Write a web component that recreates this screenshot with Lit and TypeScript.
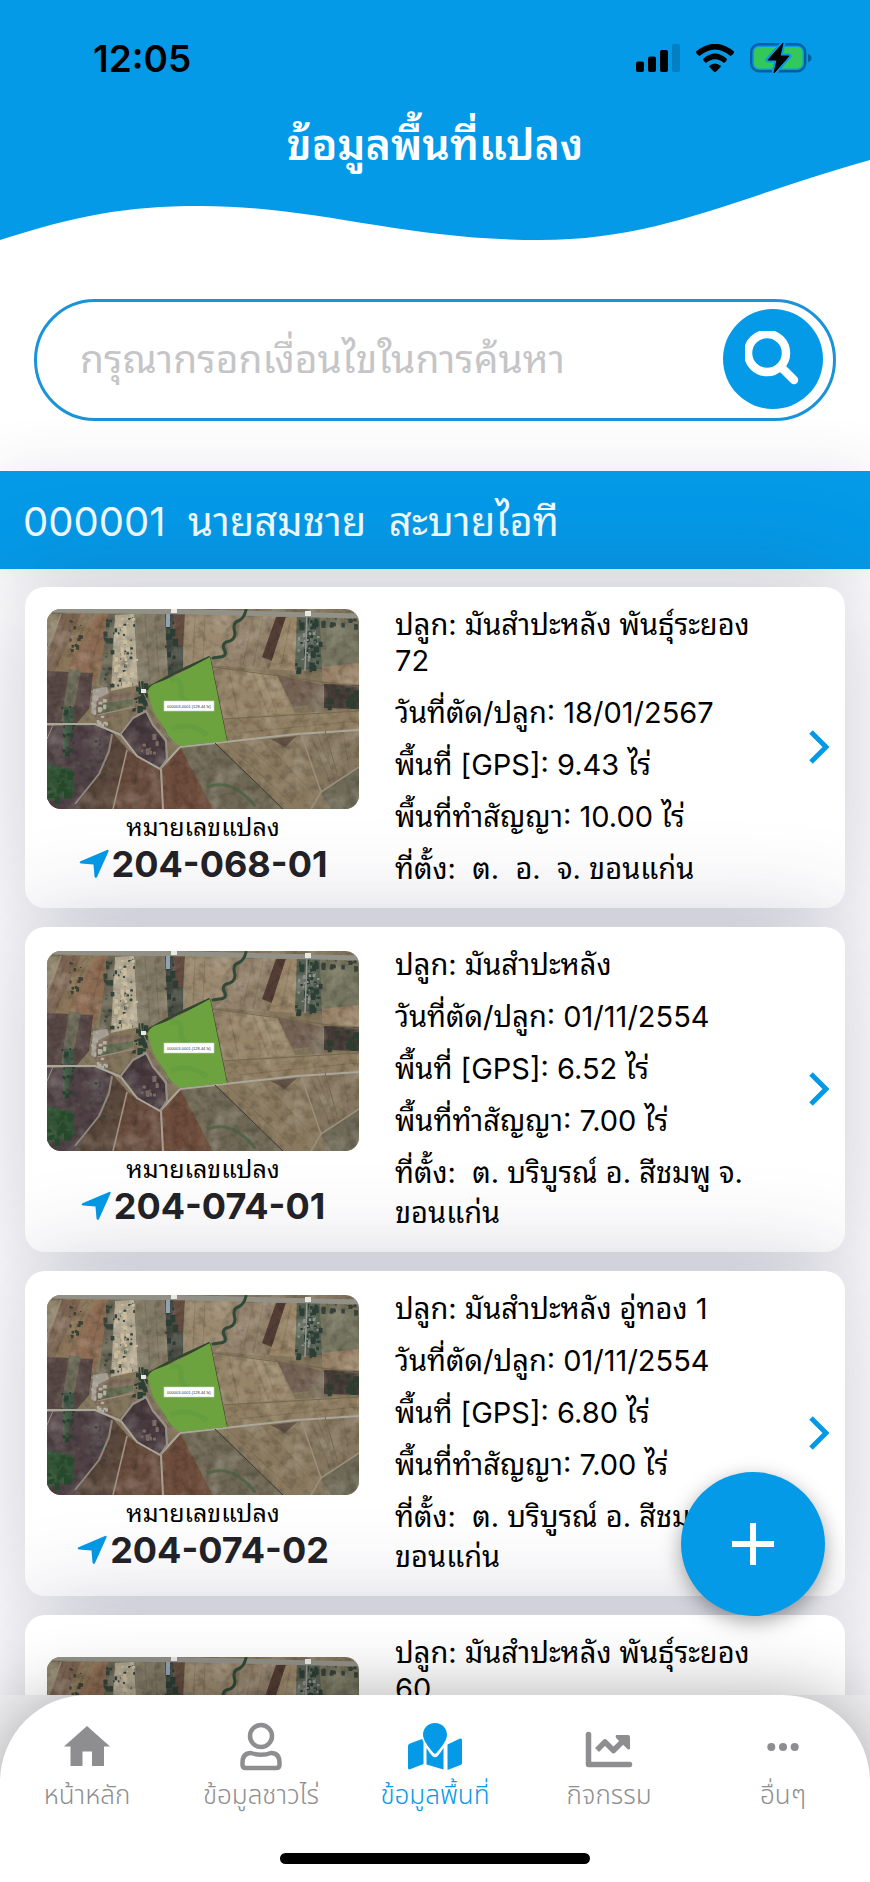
import { LitElement, html, css, svg } from "lit";
import { customElement, property, state } from "lit/decorators.js";
import { classMap } from "lit/directives/class-map.js";

interface Plot {
  id: string;
  crop: string;
  date: string;
  gps: string;
  contract: string;
  place: string;
}

const NB = "\u00a0";

const PLOTS: Plot[] = [
  {
    id: "204-068-01",
    crop: "มันสำปะหลัง พันธุ์ระยอง 72",
    date: "18/01/2567",
    gps: "9.43",
    contract: "10.00",
    place: `${NB}ต.${NB} อ.${NB} จ. ขอนแก่น`,
  },
  {
    id: "204-074-01",
    crop: "มันสำปะหลัง",
    date: "01/11/2554",
    gps: "6.52",
    contract: "7.00",
    place: `${NB}ต. บริบูรณ์ อ. สีชมพู จ. ขอนแก่น`,
  },
  {
    id: "204-074-02",
    crop: "มันสำปะหลัง อู่ทอง 1",
    date: "01/11/2554",
    gps: "6.80",
    contract: "7.00",
    place: `${NB}ต. บริบูรณ์ อ. สีชมพู จ. ขอนแก่น`,
  },
  {
    id: "204-074-03",
    crop: "มันสำปะหลัง พันธุ์ระยอง 60",
    date: "01/11/2554",
    gps: "6.80",
    contract: "7.00",
    place: `${NB}ต. บริบูรณ์ อ. สีชมพู จ. ขอนแก่น`,
  },
];

/* [fill, polygon points] */
const FIELDS: [string, string][] = [
  ["#8f8369", "0,5 15,5 0,48"],
  ["#7c6452", "15,5 34,5 8,62 0,62 0,48"],
  ["#8b765a", "34,5 50,5 22,60 8,62"],
  ["#8c6b52", "50,5 62,5 58,42 48,74 20,60"],
  ["#6a6755", "61,5 69,5 64,80 52,76"],
  ["#b3a992", "68,6 87,5 91,76 64,82"],
  ["#837b66", "88,5 118,5 121,62 98,77 91,74"],
  ["#41463f", "118,5 126,5 128,64 121,66"],
  ["#464b40", "126,30 136,34 136,60 128,64"],
  ["#644d40", "126,5 138,5 136,36 126,36"],
  ["#9b8a70", "138,5 200,5 190,12 186,30 176,36 176,47 163,48 136,60"],
  ["#93826b", "194,8 232,6 216,48 222,62 168,56 182,44 180,36 191,28"],
  ["#533d34", "229,8 239,8 225,52 215,48"],
  ["#9a8669", "239,8 250,6 248,62 222,60"],
  ["#586254", "250,6 273,6 275,60 248,61"],
  ["#767660", "273,8 312,12 312,54 275,58"],
  ["#978166", "275,58 312,54 312,75 275,73"],
  ["#968569", "165,58 230,66 248,104 177,110"],
  ["#9d8c6f", "200,62 230,66 244,100 218,108"],
  ["#756355", "230,66 276,76 262,96 246,98"],
  ["#7a6d59", "262,96 276,76 276,102 258,104"],
  ["#4a3f39", "277,75 312,76 312,100 277,99"],
  ["#907f62", "177,110 248,104 312,102 312,121 180,132"],
  ["#574745", "0,62 46,64 42,100 30,114 0,114"],
  ["#666553", "22,60 34,62 24,114 14,114"],
  ["#425a49", "17,98 27,98 23,150 16,150"],
  ["#857261", "48,84 88,84 90,96 50,112 44,98"],
  ["#616b4e", "52,95 86,90 86,96 50,106"],
  ["#4f4145", "0,117 50,116 66,124 54,160 28,200 0,200"],
  ["#405b45", "16,117 26,117 22,136 16,150"],
  ["#325436", "0,155 24,160 28,184 0,192"],
  ["#5b483c", "66,124 80,140 66,200 28,200 54,160"],
  ["#684c3d", "80,140 90,148 113,160 116,200 66,200"],
  ["#6e4d3c", "114,160 133,138 148,160 166,200 116,200"],
  ["#6f6855", "133,138 168,133 236,200 166,200"],
  ["#89795f", "168,133 254,124 273,182 264,200 236,200"],
  ["#635347", "224,130 250,127 238,138"],
  ["#85765f", "254,124 312,120 312,158 274,182"],
  ["#6e6a57", "312,158 274,184 284,200 312,200"],
  ["#483a3f", "73,126 86,109 99,103 106,116 118,133 119,150 113,159 90,147"],
];

const ROADS: [string, number, string][] = [
  ["#929188", 5, "M0 1 L150 3 L312 7"],
  ["#aca79b", 2, "M0 115 H48 L74 126 L90 147 L113 160 L133 138 L250 125 L312 121"],
  ["#97918a", 2, "M73 126 L86 109 L99 102 L106 116 L119 131 L120 150 L113 160"],
  ["#a79f95", 2, "M114 160 L116 200"],
  ["#a39487", 1.5, "M80 141 L66 200"],
  ["#8f857b", 2, "M65 125 L62 142 L52 165 L28 195"],
  ["#9b9285", 1, "M50 106 L88 98 M0 130 L6 116 M14 5 L0 40"],
  ["#86806e", 1, "M88 6 L94 78 L104 100 L122 130 L133 138"],
  ["#9b8f7c", 1.5, "M254 125 L274 183 L312 158 M274 183 L264 200"],
  ["#999890", 1.5, "M260 6 L258 62"],
  ["#3f3b31", 1, "M168 134 L236 200 M163 48 L180 132"],
  ["#75674f", 1, "M165 58 L232 67 L312 78 M177 110 L312 102 M278 122 L290 164"],
];

/* Small deterministic generator for houses and trees. */
function scatter(seed: number, n: number, x: number, y: number, w: number, h: number, fill: string, size: number) {
  let s = seed;
  const next = () => ((s = (s * 16807) % 2147483647) / 2147483647);
  return Array.from({ length: n }, () => {
    const r = size * (0.4 + next());
    return svg`<rect x=${(x + next() * w).toFixed(1)} y=${(y + next() * h).toFixed(1)} width=${r.toFixed(1)} height=${(r * (0.6 + next())).toFixed(1)} rx=".6" fill=${fill}></rect>`;
  });
}

@customElement("plot-map")
export class PlotMap extends LitElement {
  static styles = css`
    :host {
      display: block;
      overflow: hidden;
      border-radius: 14px;
    }
    svg {
      display: block;
      width: 100%;
      height: auto;
    }
    .tag {
      font-family: "Liberation Sans", "Noto Sans Thai", sans-serif;
      font-size: 4px;
      fill: #333;
    }
  `;

  render() {
    return html`<svg viewBox="0 0 312 200" role="img" aria-label="แผนที่แปลง">
      <defs>
        <filter id="grain" x="0" y="0" width="100%" height="100%">
          <feTurbulence type="fractalNoise" baseFrequency=".12" numOctaves="4" seed="8"></feTurbulence>
          <feColorMatrix values="0 0 0 0 0  0 0 0 0 0  0 0 0 0 0  1.8 0 0 0 -.78"></feColorMatrix>
        </filter>
        <filter id="glint" x="0" y="0" width="100%" height="100%">
          <feTurbulence type="fractalNoise" baseFrequency=".05" numOctaves="4" seed="3"></feTurbulence>
          <feColorMatrix values="0 0 0 0 1  0 0 0 0 .95  0 0 0 0 .85  1.6 0 0 0 -.74"></feColorMatrix>
        </filter>
      </defs>
      <rect width="312" height="200" fill="#84765d"></rect>
      ${FIELDS.map(([fill, points]) => svg`<polygon points=${points} fill=${fill}></polygon>`)}
      <g stroke="#4b3f2e" stroke-width=".6" opacity=".35" fill="none">
        <path d="M20 8 L4 52 M26 8 L10 56 M42 8 L22 48 M56 8 L42 66 M98 8 L103 72 M108 8 L112 68 M148 8 L146 54 M158 8 L156 50 M206 10 L196 56 M216 10 L206 58 M244 10 L234 58"></path>
        <path d="M206 64 L222 106 M216 66 L230 104 M182 62 L192 108 M180 134 L246 196 M196 132 L256 188 M214 130 L264 182 M264 126 L284 176 M270 124 L288 170 M190 124 L310 112 M296 122 L302 160 M150 142 L196 196 M92 152 L84 196 M102 158 L98 198 M124 156 L140 198"></path>
      </g>
      <rect width="312" height="200" filter="url(#grain)" opacity=".25"></rect>
      <rect width="312" height="200" filter="url(#glint)" opacity=".3"></rect>
      ${scatter(11, 34, 64, 8, 24, 70, "#34443d", 2)}
      ${scatter(5, 40, 66, 8, 22, 70, "#c9bd9e", 3)}
      ${scatter(21, 34, 248, 8, 24, 54, "#2c3f36", 4)}
      ${scatter(31, 26, 249, 14, 23, 40, "#8f9290", 2)}
      ${scatter(41, 18, 274, 7, 34, 9, "#36413a", 3)}
      ${scatter(51, 24, 14, 96, 14, 52, "#2a4032", 3)}
      ${scatter(61, 24, 44, 78, 16, 38, "#b4afa5", 3)}
      ${scatter(71, 22, 84, 70, 14, 34, "#2c4034", 4)}
      ${scatter(81, 20, 280, 78, 30, 20, "#2f3d31", 5)}
      ${scatter(91, 26, 0, 156, 24, 32, "#27492b", 4)}
      ${scatter(15, 12, 94, 124, 16, 22, "#7a6a66", 3)}
      ${scatter(17, 14, 40, 130, 18, 40, "#34433b", 3)}
      ${scatter(19, 20, 56, 10, 8, 66, "#34433b", 3)}
      ${scatter(23, 14, 22, 8, 14, 34, "#3d4234", 3)}
      ${scatter(29, 14, 118, 8, 8, 52, "#2c3d35", 4)}
      <path d="M46 80 L60 78 L62 84 L50 90 L48 106 L44 104 Z" fill="#aaa69f" opacity=".8"></path>
      <rect x="119" y="5" width="4" height="13" fill="#8fa3b5"></rect>
      <path d="M160 178 Q178 172 192 182 T208 198" fill="none" stroke="#46613f" stroke-width="3" opacity=".7"></path>
      ${ROADS.map(([stroke, width, d]) => svg`<path d=${d} fill="none" stroke=${stroke} stroke-width=${width} stroke-linejoin="round"></path>`)}
      <path
        d="M199 1 Q197 10 191 12 T188 24 Q188 32 179 33 Q174 36 178 42 Q180 48 172 48 L166 49"
        fill="none" stroke="#2f4a38" stroke-width="3" stroke-linecap="round"
      ></path>
      <path d="M163 48 L126 65 L101 79" fill="none" stroke="#31472f" stroke-width="3"></path>
      <path d="M163 48 L180 132 L133 137 Q122 130 119 122 L106 102 L101 84 Q101 78 107 75 L126 68 Z" fill="#6ca33f"></path>
      <path d="M124 72 Q134 68 134 80 T142 92 M124 120 Q144 112 160 126" fill="none" stroke="#5a963c" stroke-width="5" opacity=".35"></path>
      <rect x="124" y="0" width="6" height="4" fill="#e8e8e4"></rect>
      <rect x="258" y="2" width="6" height="5" fill="#e8e8e4"></rect>
      <rect x="94" y="80" width="5" height="4" fill="#e8e8e4"></rect>
      <rect x="117" y="92" width="50" height="10" fill="#fff" stroke="#c9d3bf" stroke-width=".6"></rect>
      <text class="tag" x="142" y="99" text-anchor="middle">000003-0001 (128.44 ไร่)</text>
    </svg>`;
  }
}

@customElement("plot-card")
export class PlotCard extends LitElement {
  @property({ attribute: false }) plot!: Plot;

  static styles = css`
    :host {
      display: block;
      background: #fff;
      border-radius: 20px;
      box-shadow: 0 0 100px rgba(50, 50, 93, 0.27);
    }
    .card {
      display: grid;
      grid-template-columns: minmax(0, 312fr) minmax(0, 402fr) 20px;
      column-gap: 24px;
      align-items: center;
      padding: 12px 16px 13px 22px;
    }
    .photo {
      display: flex;
      flex-direction: column;
      text-align: center;
    }
    .caption {
      margin: 0;
      padding-top: 2px;
      font-size: 25px;
      line-height: 32px;
    }
    .number {
      display: flex;
      justify-content: center;
      align-items: center;
      gap: 3px;
      color: #222226;
      font-size: 36px;
      font-weight: 700;
      line-height: 42px;
      text-decoration: none;
    }
    .arrow {
      width: 30px;
      height: 30px;
      fill: #0499e6;
    }
    .facts {
      padding: 0 16px 0 12px;
      font-size: 29px;
      line-height: 36px;
    }
    .fact {
      margin: 0;
      padding: 8px 0;
    }
    .place {
      padding: 6px 0;
      line-height: 40px;
    }
    .open {
      display: block;
      padding: 0;
      border: 0;
      background: none;
      cursor: pointer;
    }
    .chevron {
      display: block;
      width: 20px;
      height: 34px;
      fill: none;
      stroke: #0499e6;
      stroke-width: 5;
    }
  `;

  render() {
    const p = this.plot;
    return html`<article class="card">
      <div class="photo">
        <plot-map></plot-map>
        <p class="caption">หมายเลขแปลง</p>
        <a class="number" href="#${p.id}">
          <svg class="arrow" viewBox="0 0 30 30" aria-hidden="true">
            <path d="M28 1 Q30 0 29.500 2.500 L18 28 Q16.500 30 15.500 27.500 L14.500 15.500 L2 14.500 Q-.5 13.800 1.500 12.300 Z"></path>
          </svg>
          <span>${p.id}</span>
        </a>
      </div>
      <div class="facts">
        <p class="fact">ปลูก: ${p.crop}</p>
        <p class="fact">วันที่ตัด/ปลูก: ${p.date}</p>
        <p class="fact">พื้นที่ [GPS]: ${p.gps} ไร่</p>
        <p class="fact">พื้นที่ทำสัญญา: ${p.contract} ไร่</p>
        <p class="fact place">ที่ตั้ง: ${p.place}</p>
      </div>
      <button class="open" aria-label="ดูรายละเอียด">
        <svg class="chevron" viewBox="0 0 20 34"><path d="M2 2 L17 17 L2 32"></path></svg>
      </button>
    </article>`;
  }
}

const TABS = [
  {
    label: "หน้าหลัก",
    icon: svg`<path d="M24 4 L47 24.500 H41 V44 H29 V29.500 H19.500 V44 H7.500 V24.500 H1 Z"></path>`,
  },
  {
    label: "ข้อมูลชาวไร่",
    icon: svg`<g fill="none" stroke="currentColor" stroke-width="4.500">
      <circle cx="24" cy="14" r="11"></circle>
      <path d="M14 31 Q24 34.500 34 31 Q42.500 31 42.500 41 V43 Q42.500 46 39 46 H9 Q5.500 46 5.500 43 V41 Q5.500 31 14 31 Z" stroke-linejoin="round"></path>
    </g>`,
  },
  {
    label: "ข้อมูลพื้นที่",
    icon: svg`<path d="M24 1 C17 1 12 6 12 13 C12 19 20 28 22.500 31 Q24 32.500 25.500 31 C28 28 36 19 36 13 C36 6 31 1 24 1 Z"></path>
      <path d="M11 17 L-1 21.500 Q-3 22 -3 24 V46 Q-3 48 -1 47.300 L12.500 42 V20 Z"></path>
      <path d="M15.500 26 V42.500 L32.500 47.500 V26 Q29 31.500 26.500 34.200 Q24 36.500 21.500 34.200 Q18.500 31 15.500 26 Z"></path>
      <path d="M36.500 22.500 L49 16.500 Q51 16 51 18 V41 Q51 42.500 49.500 43 L36.500 48 Z"></path>`,
  },
  {
    label: "กิจกรรม",
    icon: svg`<g fill="none" stroke="currentColor" stroke-width="5.500" stroke-linecap="round" stroke-linejoin="round">
      <path d="M3.500 12.500 V42.500 H44.500"></path>
      <path d="M12 28 L20 20 L28.500 28.500 L39 18" stroke-linecap="butt"></path>
    </g>
    <path d="M31 13 H43 Q45 13 45 15 V27 Q43 28 42 26.500 L31.500 16.500 Q30 14.500 31 13 Z"></path>`,
  },
  {
    label: "อื่นๆ",
    icon: svg`<circle cx="12.300" cy="25" r="4"></circle><circle cx="24" cy="25" r="4"></circle><circle cx="35.700" cy="25" r="4"></circle>`,
  },
];

@customElement("app-root")
export class AppRoot extends LitElement {
  @state() private active = 2;

  static styles = css`
    :host {
      position: relative;
      display: flex;
      flex-direction: column;
      height: 100vh;
      overflow: hidden;
      background: #fff;
      color: #000;
      font-family: Inter, "Noto Sans Thai Looped", "Noto Looped Thai", "Loma", "Garuda", "Waree", "Noto Sans Thai", sans-serif;
    }
    * {
      box-sizing: border-box;
    }
    .header {
      flex: none;
      background: #049ae8;
    }
    .status {
      display: flex;
      justify-content: space-between;
      align-items: center;
      height: 116px;
      padding: 0 58px 0 93px;
    }
    .clock {
      font-size: 37px;
      font-weight: 600;
    }
    .indicators {
      display: flex;
      align-items: center;
      gap: 16px;
    }
    .indicators svg {
      display: block;
    }
    .title {
      margin: 0;
      color: #fff;
      font-size: 43px;
      font-weight: 600;
      line-height: 44px;
      height: 44px;
      padding-top: 6px;
      text-align: center;
    }
    .wave {
      display: block;
      width: 100%;
      height: 82px;
      fill: #fff;
    }
    .content {
      flex: 1;
      min-height: 0;
      overflow-y: auto;
      scrollbar-width: none;
    }
    .search {
      display: flex;
      align-items: center;
      margin: 57px 34px 50px;
      padding: 7px 10px 9px 43px;
      border: 3px solid #1b93d8;
      border-radius: 61px;
      background: #fff;
    }
    .query {
      flex: 1;
      min-width: 0;
      padding: 0;
      border: 0;
      outline: 0;
      background: none;
      color: #222;
      font: inherit;
      font-size: 39px;
      line-height: 60px;
    }
    .query::placeholder {
      color: #c5c5c7;
      opacity: 1;
    }
    .find {
      display: grid;
      place-items: center;
      width: 100px;
      height: 100px;
      padding: 0;
      border: 0;
      border-radius: 50%;
      background: #049ae8;
    }
    .owner {
      margin: 0;
      padding: 21px 23px 17px;
      background: #049ae8;
      box-shadow: 0 0 60px rgba(50, 50, 93, 0.12);
      color: #f2fbff;
      font-size: 40px;
      font-weight: 400;
      line-height: 60px;
    }
    .list {
      display: grid;
      gap: 19px;
      padding: 18px 25px 40px;
    }
    .add {
      position: absolute;
      right: 45px;
      bottom: 266px;
      z-index: 1;
      display: grid;
      place-items: center;
      width: 144px;
      height: 144px;
      padding: 0;
      border: 0;
      border-radius: 50%;
      background: #049ae8;
      box-shadow: 0 6px 20px rgba(0, 0, 0, 0.35);
    }
    .dock {
      position: relative;
      flex: none;
      background: #f2f2f4;
    }
    .tabs {
      display: grid;
      grid-template-columns: repeat(5, 1fr);
      padding: 27px 0 38px;
      border-radius: 87px 87px 0 0;
      background: #fff;
      box-shadow: 0 0 70px rgba(0, 0, 0, 0.32);
    }
    .tab {
      display: flex;
      flex-direction: column;
      align-items: center;
      gap: 5px;
      padding: 0;
      border: 0;
      background: none;
      color: #8e8e90;
      font-family: Inter, "Noto Sans Thai", sans-serif;
      font-size: 26px;
      font-weight: 300;
      line-height: 40px;
    }
    .tab.active {
      color: #049ae8;
    }
    .icon {
      width: 48px;
      height: 48px;
      overflow: visible;
      fill: currentColor;
    }
    .home {
      width: 310px;
      height: 11px;
      margin: 0 auto;
      border-radius: 6px;
      background: #000;
    }
    .foot {
      position: relative;
      padding-bottom: 18px;
      background: #fff;
    }
  `;

  render() {
    return html`
      <header class="header">
        <div class="status">
          <span class="clock">12:05</span>
          <div class="indicators">
            <svg width="44" height="28" viewBox="0 0 44 28" aria-hidden="true">
              <rect y="17.500" width="8" height="10.500" rx="2"></rect>
              <rect x="12" y="12.500" width="8" height="15.500" rx="2"></rect>
              <rect x="24" y="6" width="8" height="22" rx="2"></rect>
              <rect x="36" width="8" height="28" rx="2" fill="#0380c4"></rect>
            </svg>
            <svg width="38" height="28" viewBox="0 0 38 28" aria-hidden="true">
              <path d="M0 7.500 Q19 -8 38 7.500 Q38 10 34.500 12 Q19 -1 3.500 12 Q0 10 0 7.500 Z"></path>
              <path d="M7 15 Q19 4 31 15 Q31 17 28 19 Q19 11.500 10 19 Q7 17 7 15 Z"></path>
              <path d="M13 22 Q19 17 25 22 Q24 24 19.500 28 H18.500 Q14 24 13 22 Z"></path>
            </svg>
            <svg width="62" height="32" viewBox="0 0 62 32" aria-hidden="true">
              <rect x="1.200" y="2.200" width="54" height="27" rx="8" fill="none" stroke="#055f9e" stroke-width="2.400"></rect>
              <rect x="4" y="5" width="48.500" height="21.500" rx="5" fill="#34c759"></rect>
              <path d="M58 12 Q61.500 13 61.500 16 T58 20 Z" fill="#055f9e"></path>
              <path
                d="M33 1 L18 18 H27 L24 31 L39 14 H30 Z"
                stroke="#049ae8" stroke-width="5" stroke-linejoin="round" paint-order="stroke"
              ></path>
              <path d="M33 1 L18 18 H27 L24 31 L39 14 H30 Z" stroke="#000" stroke-width="1" stroke-linejoin="round"></path>
            </svg>
          </div>
        </div>
        <h1 class="title">ข้อมูลพื้นที่แปลง</h1>
        <svg class="wave" viewBox="0 0 870 82" preserveAspectRatio="none" aria-hidden="true">
          <path d="M0 80 C75 56 125 46 200 46 C320 46 400 80 540 80 C660 80 740 36 870 0 V82 H0 Z"></path>
        </svg>
      </header>

      <main class="content">
        <form class="search" role="search" @submit=${(e: Event) => e.preventDefault()}>
          <input class="query" type="text" aria-label="ค้นหา" placeholder="กรุณากรอกเงื่อนไขในการค้นหา" />
          <button class="find" aria-label="ค้นหา">
            <svg width="56" height="56" viewBox="0 0 56 56" fill="none" stroke="#fff" stroke-linecap="round" aria-hidden="true">
              <circle cx="22" cy="22" r="19" stroke-width="8.500"></circle>
              <path d="M37 37 L49 49" stroke-width="8.500"></path>
            </svg>
          </button>
        </form>
        <h2 class="owner">000001${NB} นายสมชาย${NB} สะบายไอที</h2>
        <section class="list">${PLOTS.map((p) => html`<plot-card .plot=${p}></plot-card>`)}</section>
      </main>

      <button class="add" aria-label="เพิ่มแปลง">
        <svg width="42" height="42" viewBox="0 0 42 42" stroke="#fff" stroke-width="6" aria-hidden="true">
          <path d="M21 0 V42 M0 21 H42"></path>
        </svg>
      </button>

      <footer class="dock">
        <nav class="tabs">
          ${TABS.map(
            (t, i) => html`<button
              class=${classMap({ tab: true, active: i === this.active })}
              @click=${() => (this.active = i)}
            >
              <svg class="icon" viewBox="0 0 48 48" aria-hidden="true">${t.icon}</svg>
              <span>${t.label}</span>
            </button>`
          )}
        </nav>
        <div class="foot"><div class="home"></div></div>
      </footer>
    `;
  }
}
